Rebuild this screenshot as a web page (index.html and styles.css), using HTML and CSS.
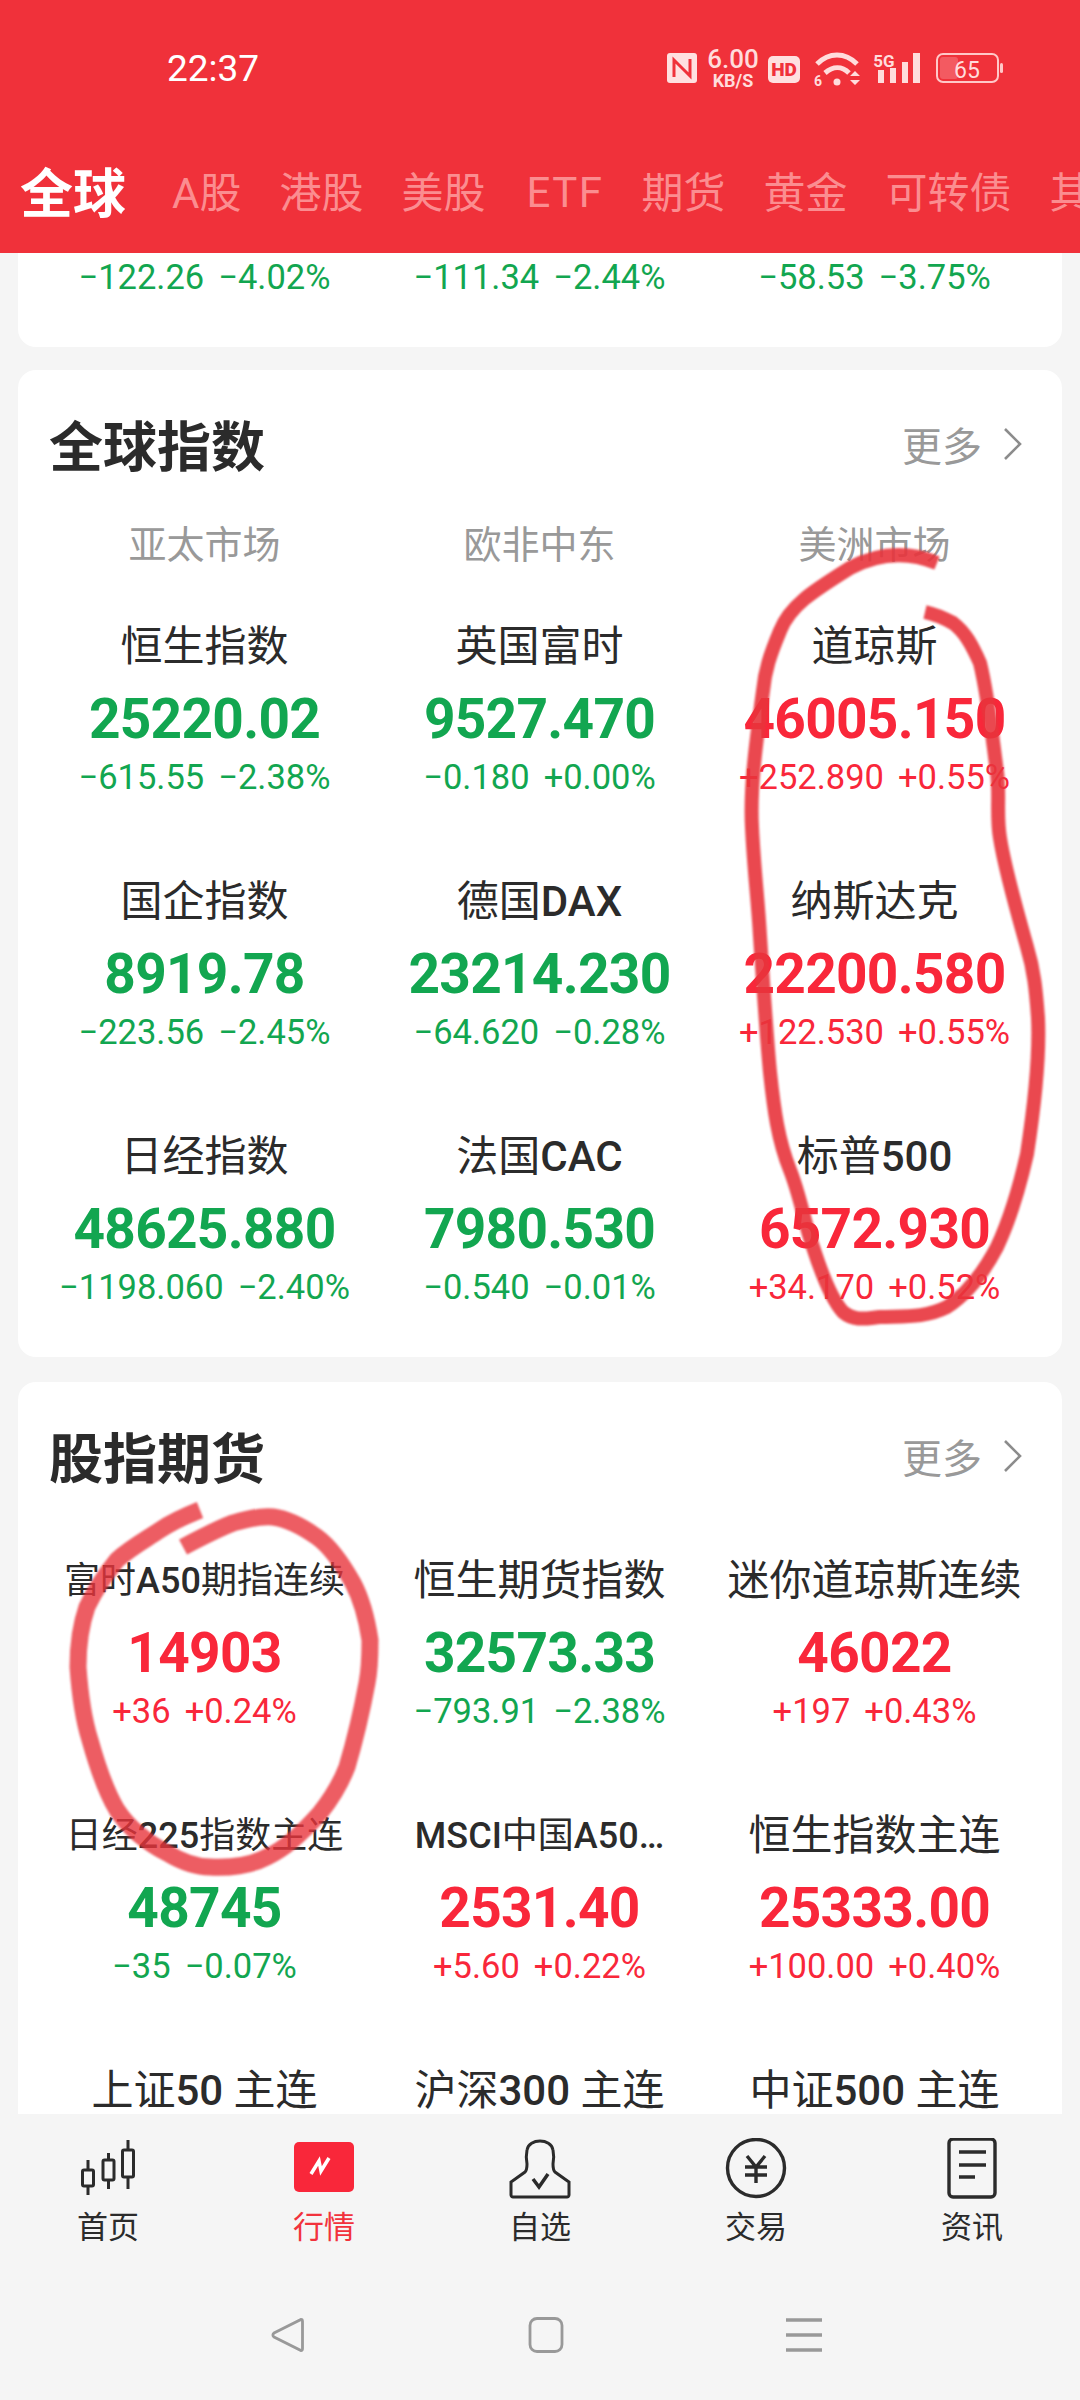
FILE: index.html
```html
<!DOCTYPE html>
<html lang="zh">
<head>
    <meta charset="UTF-8">
    <meta name="viewport" content="width=device-width, initial-scale=1.0">
    <title>行情</title>
    <link rel="stylesheet" href="styles.css">
</head>
<body>
<div class="page">
    <header class="top">
        <div class="status">
            <span class="time">22:37</span>
            <svg class="status-icons" width="336" height="48" viewBox="667 44 336 48">
                <rect x="667" y="53" width="30" height="30" rx="3" fill="#ffe0e0"/>
                <path d="M674 77V60l16 16V59" fill="none" stroke="#f0313a" stroke-width="3"/>
                <text x="733" y="68" class="st-speed" text-anchor="middle">6.00</text>
                <text x="733" y="87" class="st-unit" text-anchor="middle">KB/S</text>
                <rect x="768" y="56" width="32" height="27" rx="5" fill="#ffe0e0"/>
                <text x="784" y="76" class="st-hd" text-anchor="middle">HD</text>
                <g fill="none" stroke="#ffdcdc" stroke-width="5">
                    <path d="M817 64c12-12 28-12 40 0"/>
                    <path d="M825 73c8-7 17-7 24 0"/>
                </g>
                <circle cx="837" cy="82" r="3.5" fill="#ffdcdc"/>
                <path d="M850 76l5-5 5 5zM850 80l5 5 5-5z" fill="#ffdcdc"/>
                <text x="818" y="86" class="st-small" text-anchor="middle">6</text>
                <text x="884" y="67" class="st-5g" text-anchor="middle">5G</text>
                <g fill="#ffdcdc">
                    <rect x="878" y="70" width="6" height="13"/>
                    <rect x="890" y="68" width="6" height="15"/>
                    <rect x="902" y="62" width="6" height="21"/>
                    <rect x="913" y="53" width="7" height="30"/>
                </g>
                <rect x="937" y="54" width="61" height="28" rx="6" fill="none" stroke="#ffc8c8" stroke-width="2"/>
                <rect x="940" y="57" width="18" height="22" rx="3" fill="#ffffff" fill-opacity="0.2"/>
                <rect x="1000" y="63" width="3" height="10" rx="1.5" fill="#ffc8c8"/>
                <text x="967" y="78" class="st-batt" text-anchor="middle">65</text>
            </svg>
        </div>
        <nav class="tabs">
            <span class="tab tab-on">全球</span>
            <span class="tab">A股</span>
            <span class="tab">港股</span>
            <span class="tab">美股</span>
            <span class="tab tab-latin">ETF</span>
            <span class="tab">期货</span>
            <span class="tab">黄金</span>
            <span class="tab">可转债</span>
            <span class="tab">其他</span>
        </nav>
    </header>

    <main class="content">
        <section class="card card-cut">
            <div class="cut-row">
                <div class="change down"><span>−122.26</span><span>−4.02%</span></div>
                <div class="change down"><span>−111.34</span><span>−2.44%</span></div>
                <div class="change down"><span>−58.53</span><span>−3.75%</span></div>
            </div>
        </section>

        <section class="card">
            <div class="card-head">
                <h2>全球指数</h2>
                <span class="more">更多<svg width="22" height="36" viewBox="0 0 22 36"><path d="M3 3l15 15L3 33" fill="none" stroke="#8c8c8c" stroke-width="2.6"/></svg></span>
            </div>
            <div class="markets">
                <span>亚太市场</span>
                <span>欧非中东</span>
                <span>美洲市场</span>
            </div>
            <div class="grid">
                <div class="cell"><div class="name">恒生指数</div><div class="value down">25220.02</div><div class="change down"><span>−615.55</span><span>−2.38%</span></div></div>
                <div class="cell"><div class="name">英国富时</div><div class="value down">9527.470</div><div class="change down"><span>−0.180</span><span>+0.00%</span></div></div>
                <div class="cell"><div class="name">道琼斯</div><div class="value up">46005.150</div><div class="change up"><span>+252.890</span><span>+0.55%</span></div></div>
                <div class="cell"><div class="name">国企指数</div><div class="value down">8919.78</div><div class="change down"><span>−223.56</span><span>−2.45%</span></div></div>
                <div class="cell"><div class="name">德国<span class="latin">DAX</span></div><div class="value down">23214.230</div><div class="change down"><span>−64.620</span><span>−0.28%</span></div></div>
                <div class="cell"><div class="name">纳斯达克</div><div class="value up">22200.580</div><div class="change up"><span>+122.530</span><span>+0.55%</span></div></div>
                <div class="cell"><div class="name">日经指数</div><div class="value down">48625.880</div><div class="change down"><span>−1198.060</span><span>−2.40%</span></div></div>
                <div class="cell"><div class="name">法国<span class="latin">CAC</span></div><div class="value down">7980.530</div><div class="change down"><span>−0.540</span><span>−0.01%</span></div></div>
                <div class="cell"><div class="name">标普<span class="latin">500</span></div><div class="value up">6572.930</div><div class="change up"><span>+34.170</span><span>+0.52%</span></div></div>
            </div>
        </section>

        <section class="card">
            <div class="card-head">
                <h2>股指期货</h2>
                <span class="more">更多<svg width="22" height="36" viewBox="0 0 22 36"><path d="M3 3l15 15L3 33" fill="none" stroke="#8c8c8c" stroke-width="2.6"/></svg></span>
            </div>
            <div class="grid grid-futures">
                <div class="cell"><div class="name name-sm">富时<span class="latin">A50</span>期指连续</div><div class="value up">14903</div><div class="change up"><span>+36</span><span>+0.24%</span></div></div>
                <div class="cell"><div class="name">恒生期货指数</div><div class="value down">32573.33</div><div class="change down"><span>−793.91</span><span>−2.38%</span></div></div>
                <div class="cell"><div class="name">迷你道琼斯连续</div><div class="value up">46022</div><div class="change up"><span>+197</span><span>+0.43%</span></div></div>
                <div class="cell"><div class="name name-sm">日经<span class="latin">225</span>指数主连</div><div class="value down">48745</div><div class="change down"><span>−35</span><span>−0.07%</span></div></div>
                <div class="cell"><div class="name name-sm"><span class="latin">MSCI</span>中国<span class="latin">A50…</span></div><div class="value up">2531.40</div><div class="change up"><span>+5.60</span><span>+0.22%</span></div></div>
                <div class="cell"><div class="name">恒生指数主连</div><div class="value up">25333.00</div><div class="change up"><span>+100.00</span><span>+0.40%</span></div></div>
                <div class="cell"><div class="name">上证<span class="latin">50</span> 主连</div></div>
                <div class="cell"><div class="name">沪深<span class="latin">300</span> 主连</div></div>
                <div class="cell"><div class="name">中证<span class="latin">500</span> 主连</div></div>
            </div>
        </section>
    </main>

    <nav class="tabbar">
        <div class="tabbar-item">
            <svg width="60" height="62" viewBox="78 2140 60 62" fill="none" stroke="#2b2b2b" stroke-width="3">
                <rect x="82.5" y="2172" width="11" height="16" rx="1.5"/>
                <path d="M88 2162v10M88 2188v9"/>
                <rect x="103" y="2162" width="11" height="20" rx="1.5"/>
                <path d="M108.500 2155v7M108.500 2182v9"/>
                <rect x="122.500" y="2152" width="11" height="27" rx="1.500"/>
                <path d="M128 2142v10M128 2179v12"/>
            </svg>
            <span>首页</span>
        </div>
        <div class="tabbar-item tabbar-on">
            <svg width="60" height="62" viewBox="294 2140 60 62">
                <rect x="294" y="2144" width="60" height="50" rx="5" fill="#f9273a"/>
                <path d="M311 2176l8-13 2 10 8-13" fill="none" stroke="#fff" stroke-width="3.5"/>
            </svg>
            <span>行情</span>
        </div>
        <div class="tabbar-item">
            <svg width="62" height="62" viewBox="509 2140 62 62" fill="none" stroke="#2b2b2b" stroke-width="3">
                <path d="M527 2166c-1-5-1-9 0-14 2-12 24-12 26 0 1 5 1 9 0 14 0 4 0 6 2 8l14 10v13c0 1-1 2-2 2h-54c-1 0-2-1-2-2v-13l14-10c2-2 2-4 2-8z"/>
                <path d="M533 2181l6 8 9-13" stroke-width="3.5"/>
            </svg>
            <span>自选</span>
        </div>
        <div class="tabbar-item">
            <svg width="62" height="62" viewBox="725 2139 62 62" fill="none" stroke="#2b2b2b" stroke-width="3.4">
                <circle cx="756" cy="2169" r="28.500"/>
                <path d="M747 2157l9 11 9-11M745 2168h22M745 2176h22M756 2168v16"/>
            </svg>
            <span>交易</span>
        </div>
        <div class="tabbar-item">
            <svg width="52" height="62" viewBox="946 2139 52 62" fill="none" stroke="#2b2b2b" stroke-width="3.4">
                <rect x="949" y="2140" width="46" height="58" rx="4"/>
                <path d="M959 2153h27M959 2166h27M959 2178h16"/>
            </svg>
            <span>资讯</span>
        </div>
    </nav>

    <div class="sysnav">
        <svg width="34" height="36" viewBox="0 0 34 36"><path d="M30 2.500c1 0 1.500 1 1.500 2v27c0 1-.5 2-1.500 2L3 20c-1.500-1-1.500-3 0-4z" fill="none" stroke="#999" stroke-width="2.800"/></svg>
        <svg width="36" height="36" viewBox="0 0 36 36"><rect x="2" y="1.500" width="32" height="33" rx="7" fill="none" stroke="#999" stroke-width="2.800"/></svg>
        <svg width="36" height="36" viewBox="0 0 36 36"><path d="M0 3h36M0 18h36M0 33h36" stroke="#999" stroke-width="3.400"/></svg>
    </div>

    <svg class="scribble" width="1080" height="2400" viewBox="0 0 1080 2400">
        <path d="M937 563C910 552 880 552 850 568C815 590 790 605 780 631C770 655 765 670 763 691C755 750 750 790 752 827C754 870 758 900 760 936C763 980 766 1030 770 1072C774 1110 778 1140 790 1170C800 1195 805 1225 813 1247C822 1275 832 1300 843 1312C855 1322 868 1318 880 1317C905 1316 925 1318 947 1307C970 1292 985 1270 997 1247C1012 1215 1020 1185 1027 1154C1033 1115 1040 1060 1038 1018C1036 990 1034 970 1027 947C1018 915 1005 870 1000 838C996 815 1000 795 997 772C992 735 988 695 980 663C972 645 965 632 953 623C942 617 934 614 925 612" fill="none" stroke="#e8343c" stroke-opacity="0.9" stroke-width="14"/>
        <path d="M200 1510C185 1516 172 1522 160 1530C145 1540 130 1548 117 1560C105 1575 95 1590 87 1607C80 1627 78 1648 78 1667C80 1695 83 1718 90 1740C97 1765 105 1790 117 1810C130 1830 148 1843 167 1853C182 1862 196 1867 210 1867C230 1868 250 1866 267 1857C287 1848 305 1830 320 1813C332 1798 340 1785 347 1767C355 1740 362 1710 367 1683C370 1668 370 1654 370 1640C367 1620 362 1600 353 1583C343 1565 332 1548 317 1537C303 1527 288 1519 273 1517C258 1516 246 1519 233 1523C215 1530 200 1538 183 1547" fill="none" stroke="#e8343c" stroke-opacity="0.8" stroke-width="17"/>
    </svg>
</div>
</body>
</html>
```

FILE: styles.css
```css
* {
    box-sizing: border-box;
}

body {
    margin: 0;
    font-family: Roboto, "Noto Sans CJK SC", sans-serif;
    background-color: #f5f5f5;
}

.page {
    position: relative;
    width: 1080px;
    height: 2400px;
    display: flex;
    flex-direction: column;
    overflow: hidden;
}

.top {
    height: 253px;
    flex-shrink: 0;
    background-color: #f0313a;
    color: white;
}

.status {
    height: 136px;
    display: flex;
    align-items: center;
    justify-content: space-between;
    padding: 0 77px 0 167px;
}

.time {
    font-size: 37px;
}

.status-icons text {
    fill: #ffdcdc;
    font-family: Roboto, sans-serif;
}

.st-speed {
    font-size: 26px;
    font-weight: 500;
}

.st-unit {
    font-size: 18px;
    font-weight: 700;
}

.status-icons .st-hd {
    fill: #f0313a;
    font-size: 19px;
    font-weight: 900;
}

.st-small {
    font-size: 14px;
    font-weight: 700;
}

.st-5g {
    font-size: 17px;
    font-weight: 700;
}

.st-batt {
    font-size: 23px;
}

.tabs {
    display: flex;
    align-items: center;
    gap: 38px;
    height: 117px;
    padding: 0 0 10px 20px;
    white-space: nowrap;
}

.tab {
    font-size: 42px;
    color: #fb8d90;
    flex-shrink: 0;
}

.tab-on {
    font-size: 53px;
    font-weight: 700;
    color: white;
    margin-right: 8px;
}

.tab-latin {
    letter-spacing: 1.5px;
    margin-left: 3px;
    padding-top: 6px;
}

.content {
    flex: 1;
    min-height: 0;
    overflow: hidden;
    padding: 0 18px;
}

.card {
    background: white;
    border-radius: 18px;
    margin-bottom: 25px;
}

.card-cut {
    height: 94px;
    margin-bottom: 23px;
    border-radius: 0 0 18px 18px;
}

.cut-row {
    display: grid;
    grid-template-columns: repeat(3, 335px);
    padding-left: 19px;
}

.cut-row .change {
    line-height: 48px;
}

.card-head {
    height: 125px;
    padding: 22px 38px 0 31px;
    display: flex;
    align-items: center;
    justify-content: space-between;
}

.card-head h2 {
    margin: 0;
    font-size: 54px;
    font-weight: 700;
    color: #2b2b2b;
}

.more {
    display: flex;
    align-items: center;
    gap: 20px;
    font-size: 40px;
    color: #999;
}

.markets {
    display: grid;
    grid-template-columns: repeat(3, 335px);
    padding-left: 19px;
    height: 100px;
    line-height: 100px;
    margin-bottom: 22px;
    text-align: center;
    font-size: 38px;
    color: #999;
}

.grid {
    display: grid;
    grid-template-columns: repeat(3, 335px);
    grid-auto-rows: 182px;
    row-gap: 73px;
    padding: 0 0 48px 19px;
}

.grid-futures {
    margin-top: 44px;
}

.cell {
    display: flex;
    flex-direction: column;
    align-items: center;
}

.name {
    font-size: 42px;
    line-height: 60px;
    color: #2b2b2b;
    white-space: nowrap;
}

.name-sm {
    font-size: 36px;
}

.latin {
    font-weight: 500;
}

.value {
    margin-top: 6px;
    font-size: 55px;
    line-height: 72px;
    font-weight: 700;
    letter-spacing: -0.7px;
}

.change {
    display: flex;
    justify-content: center;
    gap: 14px;
    font-size: 34.5px;
    line-height: 44px;
}

.up {
    color: #f9273a;
}

.down {
    color: #12a650;
}

.tabbar {
    height: 176px;
    flex-shrink: 0;
    display: grid;
    grid-template-columns: repeat(5, 216px);
    padding-top: 24px;
}

.tabbar-item {
    display: flex;
    flex-direction: column;
    align-items: center;
    font-size: 31px;
    line-height: 42px;
    color: #2b2b2b;
}

.tabbar-item svg {
    display: block;
    margin-bottom: 7px;
}

.tabbar-on {
    color: #f2323c;
}

.sysnav {
    height: 110px;
    flex-shrink: 0;
    display: flex;
    align-items: flex-start;
    padding: 27px 258px 0 271px;
    justify-content: space-between;
}

.scribble {
    position: absolute;
    left: 0;
    top: 0;
    pointer-events: none;
    filter: blur(0.8px);
}
```
